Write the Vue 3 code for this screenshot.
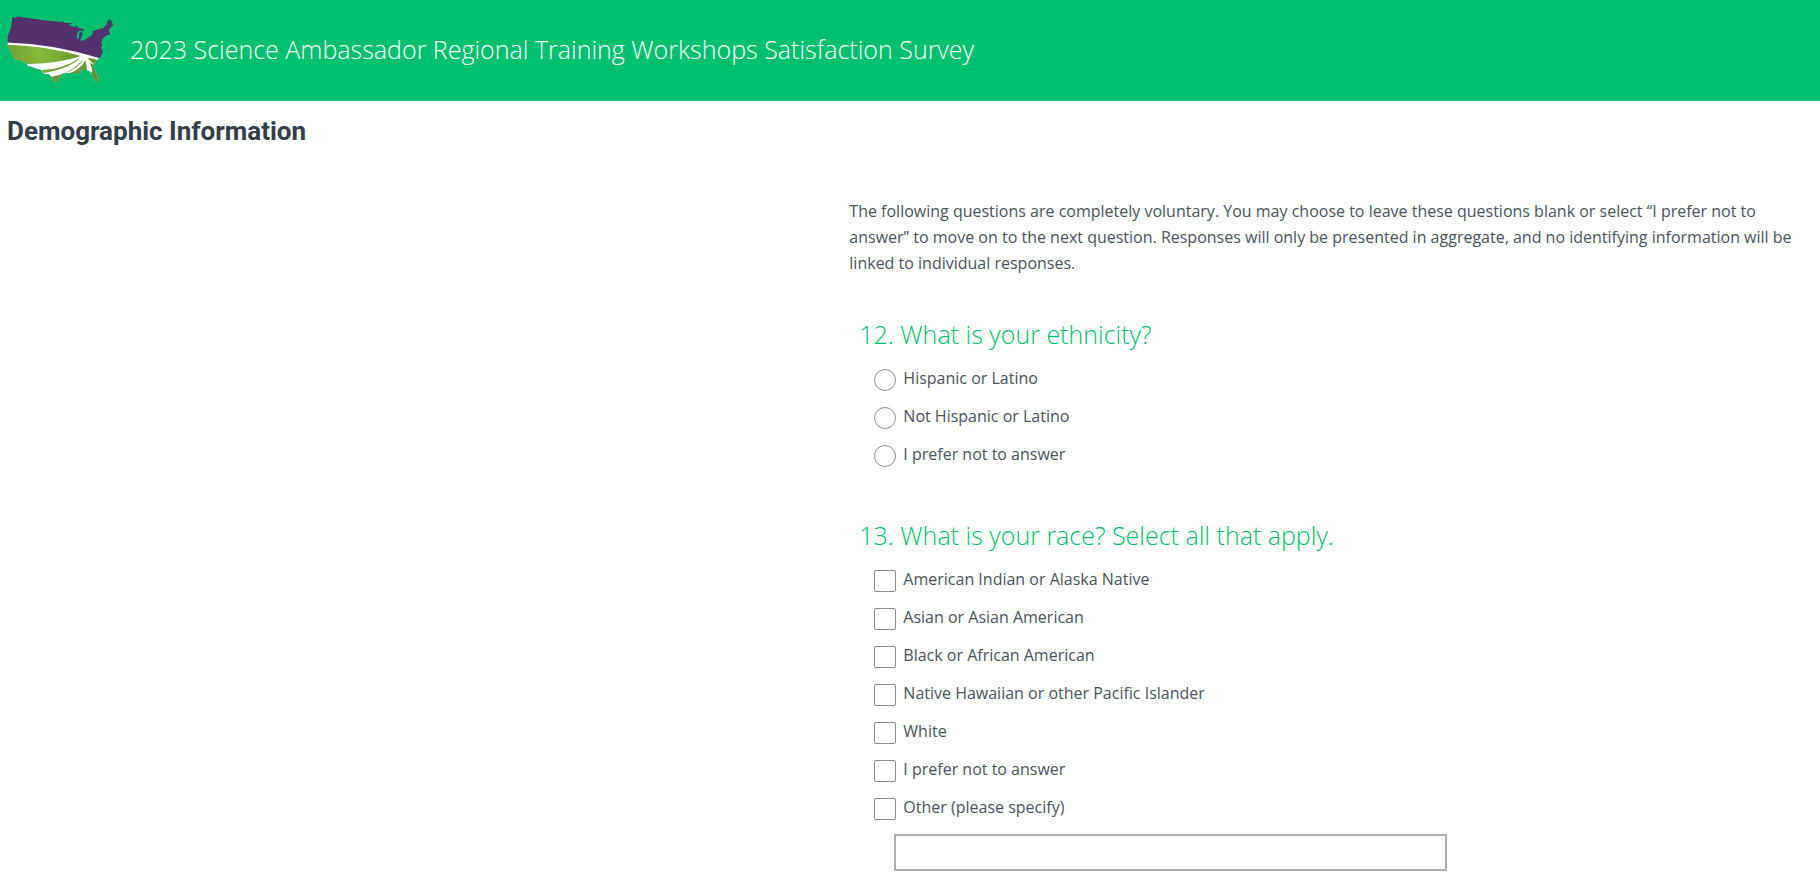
<script setup>
import { ref } from 'vue'

const ethnicity = ref('')
const races = ref([])
const otherRace = ref('')

const ethnicityOptions = ['Hispanic or Latino', 'Not Hispanic or Latino', 'I prefer not to answer']
const raceOptions = [
  'American Indian or Alaska Native',
  'Asian or Asian American',
  'Black or African American',
  'Native Hawaiian or other Pacific Islander',
  'White',
  'I prefer not to answer',
  'Other (please specify)',
]
</script>

<template>
  <div class="survey">
    <header class="banner">
      <svg class="logo" viewBox="21 51 321 210" role="img" aria-label="United States map logo">
        <defs>
          <clipPath id="country">
            <path d="M37 54 L49 57 L50 52 L90 58 L130 64 L184 69 L188 66 L192 71 L206 73 L216 72 L206 81 L214 80 L222 84 L232 80 L232 86 L246 89 L254 94 L249 96 L240 94 L232 101 L230 113 L231 120 L235 120 L238 112 L237 104 L243 97 L247 102 L246 112 L240 124 L250 125 L268 114 L278 106 L278 97 L298 90 L310 87 L319 79 L322 66 L328 61 L334 65 L339 78 L332 86 L326 93 L331 105 L318 110 L308 119 L304 130 L307 138 L303 146 L309 157 L302 173 L291 184 L279 198 L282 208 L292 229 L294 248 L289 249 L280 235 L268 217 L250 210 L240 214 L245 222 L229 223 L212 221 L187 224 L176 236 L173 250 L160 247 L154 233 L146 225 L134 226 L122 212 L106 208 L98 205 L84 201 L78 192 L62 184 L46 181 L37 168 L29 153 L22 137 L23 112 L34 82 Z" />
          </clipPath>
          <radialGradient id="field" cx="120" cy="160" r="110" gradientUnits="userSpaceOnUse">
            <stop offset="0" stop-color="#8abb3c" />
            <stop offset="1" stop-color="#6c9a32" />
          </radialGradient>
        </defs>
        <g clip-path="url(#country)">
          <rect x="15" y="45" width="330" height="215" fill="#55316b" />
          <path d="M15 130 Q160 133 300 178 L345 200 V265 H15 Z" fill="#fff" />
          <path d="M15 137 Q140 140 242 171 Q190 191 78 196 L40 200 Z" fill="url(#field)" />
          <path d="M122 214 Q190 211 240 176 Q216 205 134 222 Z" fill="#6fa536" />
          <path d="M144 235 Q218 223 250 179 Q240 206 190 224 L170 255 H150 Z" fill="#6b9632" />
          <path d="M212 222 Q248 205 256 183 L262 215 L245 227 Z" fill="#6b9632" />
          <path d="M262 178 Q276 176 292 184 L282 196 Z" fill="#6b9632" />
          <path d="M270 190 L283 200 L302 252 H286 L272 220 L278 218 Z" fill="#64902f" />
        </g>
      </svg>
      <h1 class="survey-title">2023 Science Ambassador Regional Training Workshops Satisfaction Survey</h1>
    </header>

    <h2 class="page-title">Demographic Information</h2>

    <main class="columns">
      <form class="questions" @submit.prevent>
        <p class="intro">
          The following questions are completely voluntary. You may choose to leave these questions blank or select “I
          prefer not to answer” to move on to the next question. Responses will only be presented in aggregate, and no
          identifying information will be linked to individual responses.
        </p>

        <fieldset class="question">
          <legend>12. What is your ethnicity?</legend>
          <label v-for="option in ethnicityOptions" :key="option" class="option">
            <input v-model="ethnicity" class="mark round" type="radio" name="ethnicity" :value="option" />
            <span class="option-text">{{ option }}</span>
          </label>
        </fieldset>

        <fieldset class="question">
          <legend>13. What is your race? Select all that apply.</legend>
          <label v-for="option in raceOptions" :key="option" class="option">
            <input v-model="races" class="mark" type="checkbox" name="race" :value="option" />
            <span class="option-text">{{ option }}</span>
          </label>
          <input v-model="otherRace" class="other" type="text" aria-label="Other (please specify)" />
        </fieldset>
      </form>
    </main>
  </div>
</template>

<style>
body {
  margin: 0;
  background: #fff;
}
</style>

<style scoped>
.survey {
  font-family: "Open Sans", "Noto Sans", sans-serif;
  font-weight: 400;
  font-size: 16px;
  line-height: 26px;
  color: #4a545d;
}
.banner {
  display: flex;
  align-items: center;
  gap: 16px;
  min-height: 101px;
  padding: 0 7px;
  box-sizing: border-box;
  background: #00bf6f;
}
.logo {
  flex: none;
  width: 107px;
  height: 70px;
}
.survey-title {
  margin: 0;
  padding-bottom: 4px;
  font-size: 25px;
  font-weight: 300;
  line-height: 32px;
  color: #fff;
}
.page-title {
  margin: 14px 7px 51px;
  font-family: Roboto, "Open Sans", sans-serif;
  font-size: 26px;
  font-weight: 700;
  line-height: 32px;
  color: #333e48;
}
.columns {
  display: grid;
  grid-template-columns: 7fr 8fr;
}
.questions {
  grid-column: 2;
  padding-right: 24px;
}
.intro {
  margin: 0 0 40px;
}
.question {
  margin: 0;
  padding: 0 0 0 25px;
  border: 0;
  min-width: 0;
}
.question + .question {
  margin-top: 42px;
}
.question legend {
  margin: 0 0 9px -15px;
  padding: 0;
  font-size: 25px;
  font-weight: 300;
  line-height: 36px;
  color: #00bf6f;
}
.option {
  display: flex;
  align-items: center;
  gap: 7px;
  width: fit-content;
  height: 38px;
}
.option-text {
  padding-bottom: 4px;
}
.mark {
  appearance: none;
  flex: none;
  box-sizing: border-box;
  width: 22px;
  height: 22px;
  margin: 0;
  border: 1px solid #8c8c8c;
  border-radius: 2px;
  background: #fff;
}
.mark.round {
  border-radius: 50%;
}
.mark:checked {
  box-shadow: inset 0 0 0 4px #fff;
  background: #00bf6f;
}
.other {
  display: block;
  box-sizing: border-box;
  width: 60%;
  height: 37px;
  margin: 6px 0 0 20px;
  padding: 0 8px;
  border: 2px solid #adadad;
  border-radius: 0;
  background: #fff;
  font: inherit;
  color: inherit;
}
</style>
